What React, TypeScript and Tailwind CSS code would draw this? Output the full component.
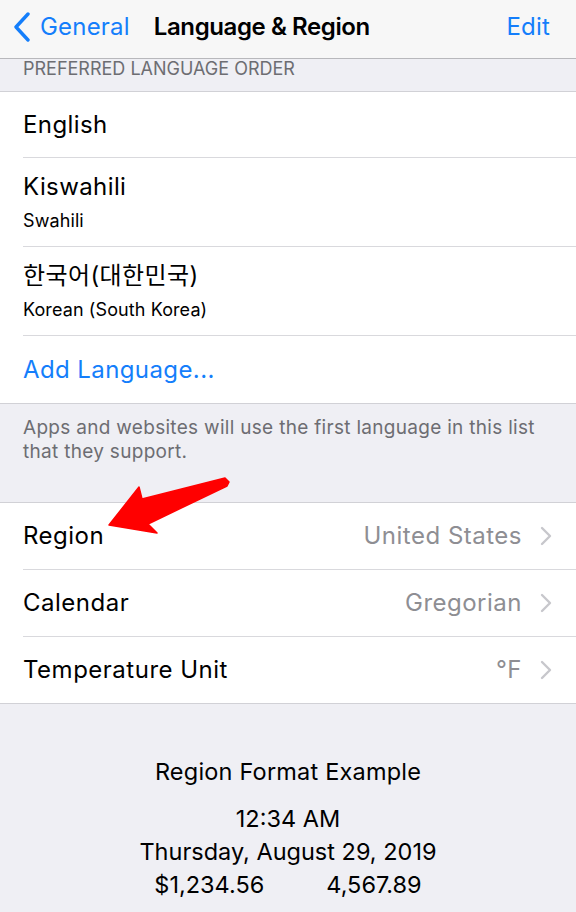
import { Fragment } from "react"

const font = { fontFamily: "Inter, 'Noto Sans CJK KR', sans-serif" }

function Chevron() {
  return (
    <svg width="12" height="20" viewBox="0 0 12 20" className="ml-[18px]">
      <polyline points="2,2 10,10 2,18" fill="none" stroke="#c7c7cc" strokeWidth="2.4" strokeLinecap="round" strokeLinejoin="round" />
    </svg>
  )
}

const languages = [
  { name: "English", h: "h-[65px]" },
  { name: "Kiswahili", sub: "Swahili", h: "h-[88px]" },
  { name: "한국어(대한민국)", sub: "Korean (South Korea)", h: "h-[88px]" },
]

const settings = [
  { label: "Region", value: "United States" },
  { label: "Calendar", value: "Gregorian" },
  { label: "Temperature Unit", value: "°F" },
]

export default function App() {
  return (
    <div className="relative w-[576px] h-[912px] overflow-hidden bg-[#efeff4] text-black" style={font}>
      {/* Nav bar */}
      <div className="flex items-center h-[59px] pb-[4px] bg-[#f7f7f7] border-b border-[#b8b8bc]">
        <svg width="18" height="30" viewBox="0 0 18 30" className="ml-[13px]">
          <polyline points="15,2 3,15 15,28" fill="none" stroke="#147efb" strokeWidth="3.4" strokeLinecap="round" strokeLinejoin="round" />
        </svg>
        <span className="ml-[9px] text-[24px] leading-none tracking-[0.2px] text-[#147efb]">General</span>
        <span className="ml-[24px] text-[24px] font-semibold leading-none tracking-[-0.4px]">Language &amp; Region</span>
        <span className="ml-auto pr-[26px] text-[24px] leading-none tracking-[0.2px] text-[#147efb]">Edit</span>
      </div>

      {/* Section header */}
      <div className="h-[32px] pl-[23px] pt-[1px] text-[18px] leading-[18px] text-[#6d6d72]">
        PREFERRED LANGUAGE ORDER
      </div>

      {/* Languages */}
      <div className="bg-white border-t border-b border-[#d1d1d6] tracking-[0.4px]">
        {languages.map((l) => (
          <Fragment key={l.name}>
            <div className={`${l.h} flex flex-col justify-center pl-[23px]`}>
              <div className="text-[24px] leading-[30px]">{l.name}</div>
              {l.sub && <div className="text-[18px] leading-[22px] mt-[8px] tracking-[0.1px]">{l.sub}</div>}
            </div>
            <div className="ml-[23px] h-px bg-[#d9d9dd]" />
          </Fragment>
        ))}
        <div className="h-[67px] flex items-center pl-[23px] text-[24px] text-[#147efb]">Add Language...</div>
      </div>

      {/* Footer */}
      <div className="h-[98px] pl-[23px] pr-[30px] pt-[12px] text-[19px] leading-[24px] tracking-[0.3px] text-[#6d6d72]">
        Apps and websites will use the first language in this list that they support.
      </div>

      {/* Region settings */}
      <div className="bg-white border-t border-b border-[#d1d1d6] tracking-[0.5px]">
        {settings.map((s, i) => (
          <Fragment key={s.label}>
            {i > 0 && <div className="ml-[23px] h-px bg-[#d9d9dd]" />}
            <div className="h-[66px] flex items-center pl-[23px] pr-[24px]">
              <span className="text-[24px]">{s.label}</span>
              <span className="ml-auto text-[24px] text-[#8e8e93]">{s.value}</span>
              <Chevron />
            </div>
          </Fragment>
        ))}
      </div>

      {/* Region format example */}
      <div className="flex flex-col items-center pt-[54px]">
        <div className="text-[23.5px] leading-[28px] tracking-[0.2px]">Region Format Example</div>
        <div className="mt-[16px] text-[23.5px] leading-[33px] text-center">
          <div>12:34 AM</div>
          <div>Thursday, August 29, 2019</div>
          <div className="flex justify-center gap-[62px]">
            <span>$1,234.56</span>
            <span>4,567.89</span>
          </div>
        </div>
      </div>

      {/* Red arrow annotation */}
      <svg className="absolute left-0 top-0 pointer-events-none" width="576" height="912" viewBox="0 0 576 912">
        <polygon
          points="109,525 139,487 142,499 225,478 229,482 227,486 148,524 157,533"
          fill="#ff0000"
          stroke="#ff0000"
          strokeWidth="1.5"
          strokeLinejoin="round"
        />
      </svg>
    </div>
  )
}
